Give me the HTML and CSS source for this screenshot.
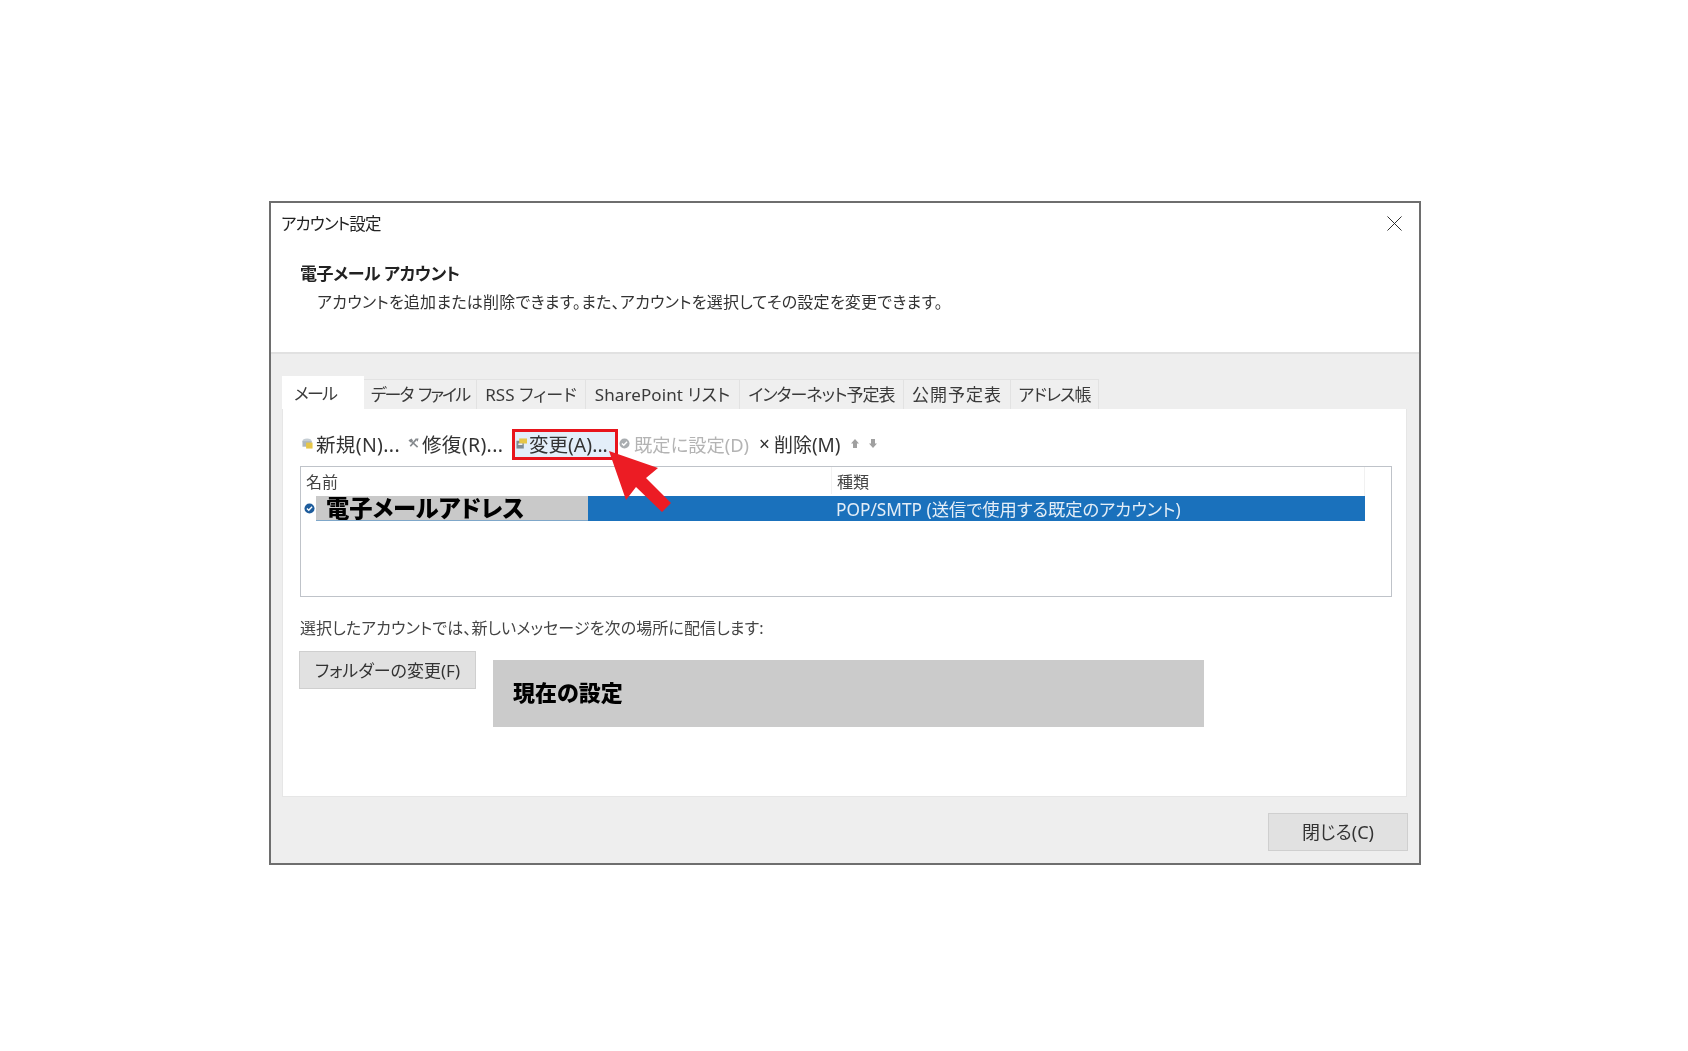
FILE: index.html
```html
<!DOCTYPE html>
<html lang="ja">
<head>
<meta charset="utf-8">
<title>アカウント設定</title>
<link rel="stylesheet" href="styles.css">
</head>
<body>
<main class="dialog">
  <header class="top">
    <div class="titlebar">
      <span class="title">アカウント設定</span>
      <svg class="close" viewBox="0 0 16 16"><path d="M0.5 0.5 15.5 15.5M15.5 0.5 0.5 15.5"/></svg>
    </div>
    <h1 class="heading">電子メール アカウント</h1>
    <p class="lead">アカウントを追加または削除できます。また、アカウントを選択してその設定を変更できます。</p>
  </header>
  <section class="body">
    <nav class="tabs">
      <span class="tab active">メール</span>
      <span class="tab tight">データ ファイル</span>
      <span class="tab">RSS フィード</span>
      <span class="tab">SharePoint リスト</span>
      <span class="tab snug">インターネット予定表</span>
      <span class="tab wide">公開予定表</span>
      <span class="tab snug">アドレス帳</span>
    </nav>
    <div class="panel">
      <div class="toolbar">
        <span class="tool roomy">
          <svg class="ticon" viewBox="0 0 12 12"><ellipse cx="5.5" cy="3.5" rx="5" ry="3" fill="#c6ced4"/><rect x="0.5" y="3.5" width="10" height="6" fill="#aeb7be"/><rect x="4.5" y="5" width="7" height="6.5" fill="#e6c648"/></svg>
          新規(N)...
        </span>
        <span class="tool roomy">
          <svg class="ticon" viewBox="0 0 12 12"><path d="M3 3 10.5 10M9 1.5 2.5 9" stroke="#85898d" stroke-width="1.8" fill="none"/><path d="M0.5 2.5 4 0.5 5.5 3 2.5 5ZM8 0.5H11.5L10.5 4Z" fill="#85898d"/></svg>
          修復(R)...
        </span>
        <span class="tool picked">
          <svg class="ticon" viewBox="0 0 12 12"><rect x="0.5" y="3" width="8" height="8.5" fill="#7f8c94"/><rect x="3.5" y="0.5" width="8.5" height="5.5" fill="#e6c648"/><rect x="2.5" y="6" width="4.5" height="1.5" fill="#fff"/></svg>
          変更(A)...
        </span>
        <span class="tool off">
          <svg class="ticon" viewBox="0 0 12 12"><circle cx="6" cy="6" r="5.5" fill="#a9adb0"/><path d="M3.2 6 5.2 8 8.8 4" stroke="#fff" stroke-width="1.5" fill="none"/></svg>
          既定に設定(D)
        </span>
        <span class="tool del"><span class="x">×</span>削除(M)</span>
        <svg class="arrow" viewBox="0 0 8 9"><path d="M4 0 8 4.5H6V9H2V4.5H0Z"/></svg>
        <svg class="arrow" viewBox="0 0 8 9"><path d="M4 9 8 4.5H6V0H2V4.5H0Z"/></svg>
      </div>
      <div class="table">
        <div class="thead"><span class="th">名前</span><span class="th">種類</span></div>
        <div class="row">
          <svg class="rowcheck" viewBox="0 0 12 12"><circle cx="6" cy="6" r="5.5" fill="#1d5c9c"/><path d="M3.2 6 5.2 8 8.8 4" stroke="#fff" stroke-width="1.5" fill="none"/></svg>
          <div class="sel">
            <span class="mask">電子メールアドレス</span>
            <span class="spacer"></span>
            <span class="kind">POP/SMTP (送信で使用する既定のアカウント)</span>
          </div>
        </div>
      </div>
      <p class="note">選択したアカウントでは、新しいメッセージを次の場所に配信します:</p>
      <div class="deliver">
        <button class="btn folder">フォルダーの変更(F)</button>
        <div class="current">現在の設定</div>
      </div>
    </div>
    <footer class="foot"><button class="btn closebtn">閉じる(C)</button></footer>
  </section>
  <svg class="pointer" viewBox="0 0 80 70"><path d="M2 2 51 19 39 29 64 54 55 63 29 38 19 51Z"/></svg>
</main>
</body>
</html>
```
FILE: styles.css
```css
* { box-sizing: border-box; }
html, body { margin: 0; padding: 0; background: #fff; }
body {
  height: 1051px;
  overflow: hidden;
  padding: 201px 0 0 269px;
  font-family: "Noto Sans", "Noto Sans CJK JP", sans-serif;
  font-feature-settings: "palt";
  color: #333;
}
.dialog {
  position: relative;
  width: 1152px;
  height: 664px;
  border: 2px solid #6e6e6e;
  background: #fff;
  display: flex;
  flex-direction: column;
  filter: blur(0.35px);
}
.top { height: 151px; border-bottom: 2px solid #e1e1e1; flex: none; }
.titlebar {
  height: 40px;
  display: flex;
  align-items: center;
  justify-content: space-between;
  padding: 0 17px 0 10px;
}
.title { font-size: 16.5px; letter-spacing: -0.9px; color: #222; }
.close { width: 15px; height: 15px; stroke: #222; stroke-width: 1; fill: none; }
.heading { margin: 19px 0 0 29px; font-size: 17px; line-height: 24px; font-weight: 700; letter-spacing: -0.4px; color: #222; }
.lead { margin: 4px 0 0 46px; font-size: 16px; line-height: 24px; letter-spacing: 0.24px; color: #333; }
.body {
  flex: 1;
  background: #eee;
  padding: 22px 11px 0 11px;
  display: flex;
  flex-direction: column;
}
.tabs {
  display: grid;
  grid-template-columns: 82px 113px 109px 154px 164px 107px 88px;
  width: 817px;
  height: 33px;
  align-items: end;
}
.tab {
  height: 30px;
  display: flex;
  align-items: center;
  justify-content: center;
  border: 1px solid #e2e2e2;
  border-left: 0;
  border-bottom: 0;
  font-size: 17px;
  letter-spacing: 0.1px;
  padding-bottom: 2px;
  background: #efefef;
  color: #3a3a3a;
}
.tab.tight { letter-spacing: -1.9px; word-spacing: 3px; }
.tab.snug { letter-spacing: -0.9px; }
.tab.wide { letter-spacing: 1px; }
.tab.active { height: 33px; background: #fff; border: 0; padding-bottom: 0; justify-content: flex-start; padding-left: 12px; letter-spacing: -1.8px; }
.panel {
  height: 388px;
  width: 1125px;
  background: #fff;
  border: 1px solid #e6e6e6;
  border-top: 0;
  padding: 20px 15px 0 17px;
}
.toolbar {
  display: grid;
  grid-template-columns: 106px 104px 107px 140px 92px 18px 8px;
  align-items: center;
  height: 31px;
  margin-left: 2px;
}
.tool {
  display: flex;
  align-items: center;
  height: 31px;
  font-size: 19.5px;
  gap: 3px;
  padding-bottom: 2px;
  color: #333;
  white-space: nowrap;
}
.roomy { letter-spacing: 0.35px; }
.ticon { width: 11px; height: 11px; flex: none; }
.picked {
  width: 106px;
  border: 3px solid #e8141c;
  background: #e3eef9;
  padding-left: 1px;
  gap: 2px;
}
.off { color: #b4b4b4; padding-left: 0; gap: 4px; font-size: 18.3px; }
.del { font-size: 19px; }
.x { font-size: 19px; margin-right: 1px; }
.arrow { width: 8px; height: 9px; fill: #a0a0a0; margin-bottom: 2px; }
.table {
  margin-top: 6px;
  height: 131px;
  width: 1092px;
  border: 1px solid #bfc3c9;
  padding: 0 26px 0 0;
}
.thead {
  display: grid;
  grid-template-columns: 530px 1fr;
  height: 29px;
  align-items: center;
  padding-bottom: 2px;
  border-right: 1px solid #f1f1f1;
}
.th { font-size: 16px; padding-left: 5px; color: #444; }
.th + .th { border-left: 1px solid #f1f1f1; height: 100%; display: flex; align-items: center; }
.row { display: flex; align-items: center; height: 25px; }
.rowcheck { width: 11px; height: 11px; margin-left: 3px; flex: none; }
.sel {
  flex: 1;
  margin-left: 1px;
  height: 25px;
  background: #1a71bc;
  display: flex;
  align-items: center;
}
.mask {
  width: 272px;
  height: 25px;
  background: #c9c9c9;
  border-bottom: 1px solid #7fa7c9;
  color: #000;
  font-size: 23.3px;
  line-height: 25px;
  font-weight: 900;
  padding-left: 10px;
  white-space: nowrap;
  flex: none;
}
.spacer { width: 248px; flex: none; }
.kind { color: #e4eef7; font-size: 17.3px; white-space: nowrap; padding-bottom: 1px; }
.note { margin: 19px 0 0 0; font-size: 16px; line-height: 24px; letter-spacing: 0.1px; color: #444; }
.deliver { display: flex; align-items: flex-start; margin: 11px 0 0 -1px; }
.btn {
  font: inherit;
  font-feature-settings: "palt";
  background: #e1e1e1;
  border: 1px solid #cfcfcf;
  color: #333;
  padding: 0 0 2px;
}
.folder { width: 177px; height: 38px; font-size: 17px; }
.current {
  margin: 9px 0 0 17px;
  width: 711px;
  height: 67px;
  background: #cbcbcb;
  color: #000;
  font-weight: 900;
  font-size: 22px;
  line-height: 64px;
  padding-left: 20px;
}
.foot { display: flex; justify-content: flex-end; padding-top: 16px; }
.closebtn { width: 140px; height: 38px; font-size: 18px; }
.pointer {
  position: absolute;
  left: 336px;
  top: 246px;
  width: 80px;
  height: 70px;
  fill: #ec1c24;
}
```
